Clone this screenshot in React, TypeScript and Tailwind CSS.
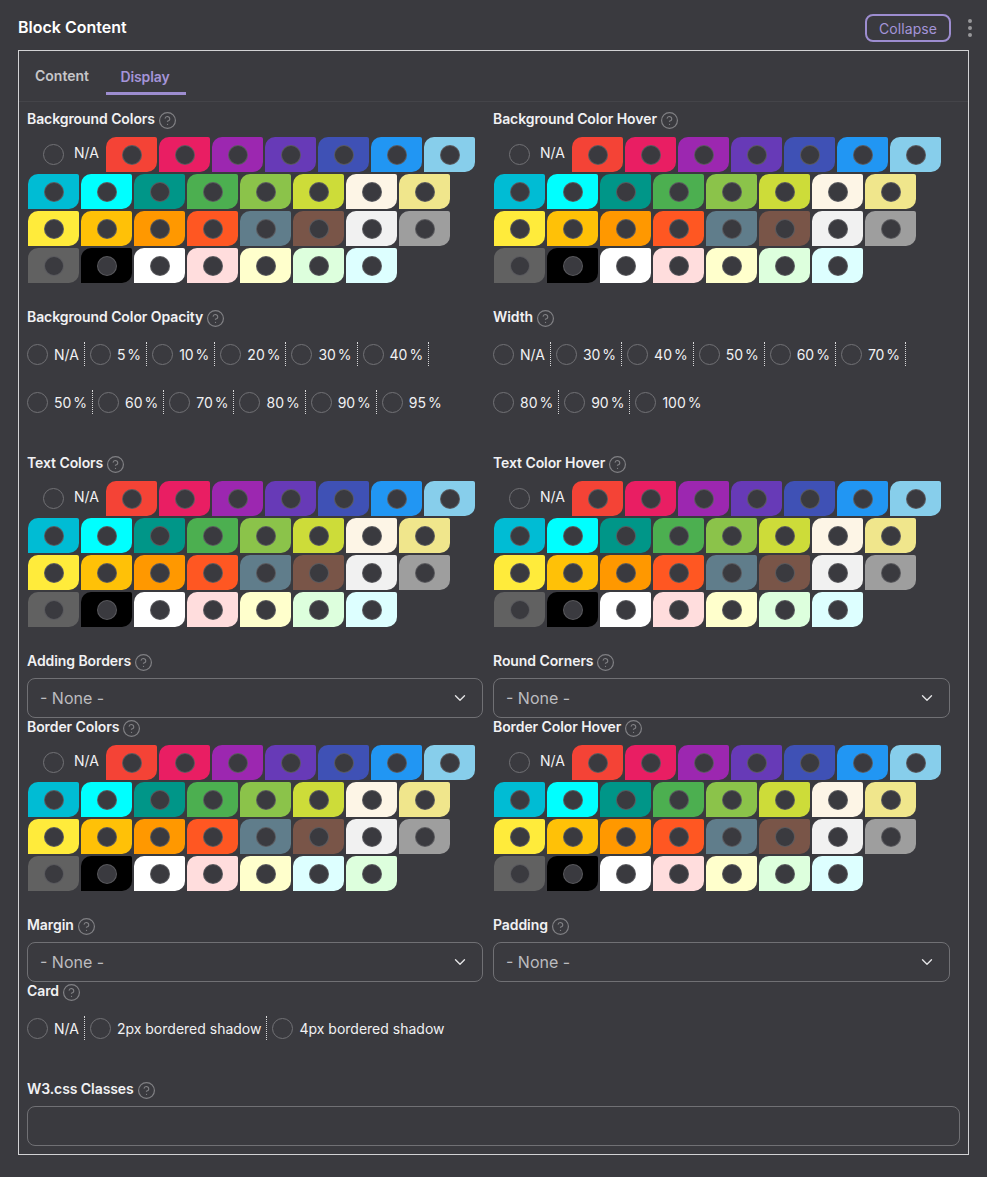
import { ChevronDown, CircleHelp } from "lucide-react";

const COLORS = [
  "#f44336", "#e91e63", "#9c27b0", "#673ab7", "#3f51b5", "#2196f3", "#87ceeb",
  "#00bcd4", "#00ffff", "#009688", "#4caf50", "#8bc34a", "#cddc39", "#fdf5e6", "#f0e68c",
  "#ffeb3b", "#ffc107", "#ff9800", "#ff5722", "#607d8b", "#795548", "#f1f1f1", "#9e9e9e",
  "#616161", "#000000", "#ffffff", "#ffdddd", "#ffffcc", "#ddffdd", "#ddffff",
];

// the left border field has the last two pale colors swapped
const COLORS_SWAPPED = [...COLORS.slice(0, 28), "#ddffff", "#ddffdd"];

function Label({ text }: { text: string }) {
  return (
    <div className="flex h-5 items-center gap-[3px] text-[14px] leading-5 font-semibold tracking-[-0.08px] text-[#f1f1f3]">
      <span>{text}</span>
      <CircleHelp size={19} strokeWidth={1.5} className="mt-[2px] text-[#808084]" />
    </div>
  );
}

function Radio() {
  return <span className="block h-[21px] w-[21px] shrink-0 rounded-full border border-[#717175]" />;
}

function ColorField({ label, colors = COLORS }: { label: string; colors?: string[] }) {
  return (
    <div className="mb-6">
      <Label text={label} />
      <div className="mt-2 mr-[10px] ml-px flex flex-wrap gap-[2px]">
        <div className="flex h-[35px] w-[76px] items-center pl-[15px]">
          <Radio />
          <span className="mt-[-5px] ml-[10px] text-[14px] text-[#f1f1f3]">N/A</span>
        </div>
        {colors.map((c) => (
          <div
            key={c}
            className="flex h-[35px] w-[51px] items-center justify-center rounded-tl-[10px] rounded-tr-[2px] rounded-br-[10px]"
            style={{ backgroundColor: c }}
          >
            <span className="block h-5 w-5 rounded-full border border-[#77777b]/50 bg-[#3a3a3f]" />
          </div>
        ))}
      </div>
    </div>
  );
}

function RadioField({ label, options }: { label: string; options: string[] }) {
  return (
    <div className="mb-[39px]">
      <Label text={label} />
      <div className="mt-[15px] mr-[10px] flex flex-wrap gap-y-6">
        {options.map((o, i) => (
          <div
            key={o}
            className={`flex h-6 items-center ${
              i < options.length - 1 ? "mr-[5px] border-r border-dotted border-white/80 pr-[5px]" : ""
            }`}
          >
            <Radio />
            <span
              className={`ml-[6px] text-[14px] whitespace-nowrap text-[#f1f1f3] ${
                o.endsWith("%") ? "[word-spacing:-2px]" : ""
              }`}
            >
              {o}
            </span>
          </div>
        ))}
      </div>
    </div>
  );
}

function SelectField({ label }: { label: string }) {
  return (
    <div className="mb-[-1px]">
      <Label text={label} />
      <div className="mt-[7px] mr-[10px] flex h-10 items-center justify-between rounded-lg border border-[#707074] pr-[13px] pl-3">
        <span className="text-[16px] text-[#bcbcbf]">- None -</span>
        <ChevronDown size={18} strokeWidth={1.8} className="text-[#e4e4e6]" />
      </div>
    </div>
  );
}

export default function App() {
  return (
    <div className="min-h-[1177px] bg-[#3a3a3f] font-['Inter',sans-serif]">
      <div className="flex h-[50px] items-start justify-between pt-[14px] pr-[7px] pl-[18px]">
        <h1 className="mt-[3px] text-[16px] leading-5 font-semibold text-white">Block Content</h1>
        <div className="flex items-center gap-[9px]">
          <button className="flex h-7 w-[86px] items-center justify-center rounded-lg border-2 border-[#9d8dd0] text-[14px] tracking-[0.1px] text-[#a494d8]">
            Collapse
          </button>
          <div className="flex w-5 flex-col items-center gap-[3px]">
            <span className="h-1 w-1 rounded-full bg-[#98989b]" />
            <span className="h-1 w-1 rounded-full bg-[#98989b]" />
            <span className="h-1 w-1 rounded-full bg-[#98989b]" />
          </div>
        </div>
      </div>

      <div className="ml-[18px] w-[951px] border border-[#d2d2d4]">
        <div className="h-[51px] border-b border-[#444449]">
          <div className="flex h-11 items-start">
            <div className="mt-[15px] ml-4 text-[14px] leading-5 font-semibold text-[#c6c6c9]">Content</div>
            <div className="ml-[17px] flex h-full w-20 justify-center border-b-[3px] border-[#9d8dd0] pt-4 pr-[2px] text-[14px] leading-5 font-semibold tracking-[-0.1px] text-[#a494d8]">
              Display
            </div>
          </div>
        </div>

        <div className="grid grid-cols-[466px_467px] px-2 pt-[7px] pb-2">
          <ColorField label="Background Colors" />
          <ColorField label="Background Color Hover" />
          <RadioField
            label="Background Color Opacity"
            options={["N/A", "5 %", "10 %", "20 %", "30 %", "40 %", "50 %", "60 %", "70 %", "80 %", "90 %", "95 %"]}
          />
          <RadioField
            label="Width"
            options={["N/A", "30 %", "40 %", "50 %", "60 %", "70 %", "80 %", "90 %", "100 %"]}
          />
          <ColorField label="Text Colors" />
          <ColorField label="Text Color Hover" />
          <SelectField label="Adding Borders" />
          <SelectField label="Round Corners" />
          <ColorField label="Border Colors" colors={COLORS_SWAPPED} />
          <ColorField label="Border Color Hover" />
          <SelectField label="Margin" />
          <SelectField label="Padding" />
          <div className="col-span-2">
            <RadioField label="Card" options={["N/A", "2px bordered shadow", "4px bordered shadow"]} />
          </div>
          <div className="col-span-2">
            <Label text="W3.css Classes" />
            <div className="mt-[7px] h-10 rounded-lg border border-[#707074]" />
          </div>
        </div>
      </div>
    </div>
  );
}
